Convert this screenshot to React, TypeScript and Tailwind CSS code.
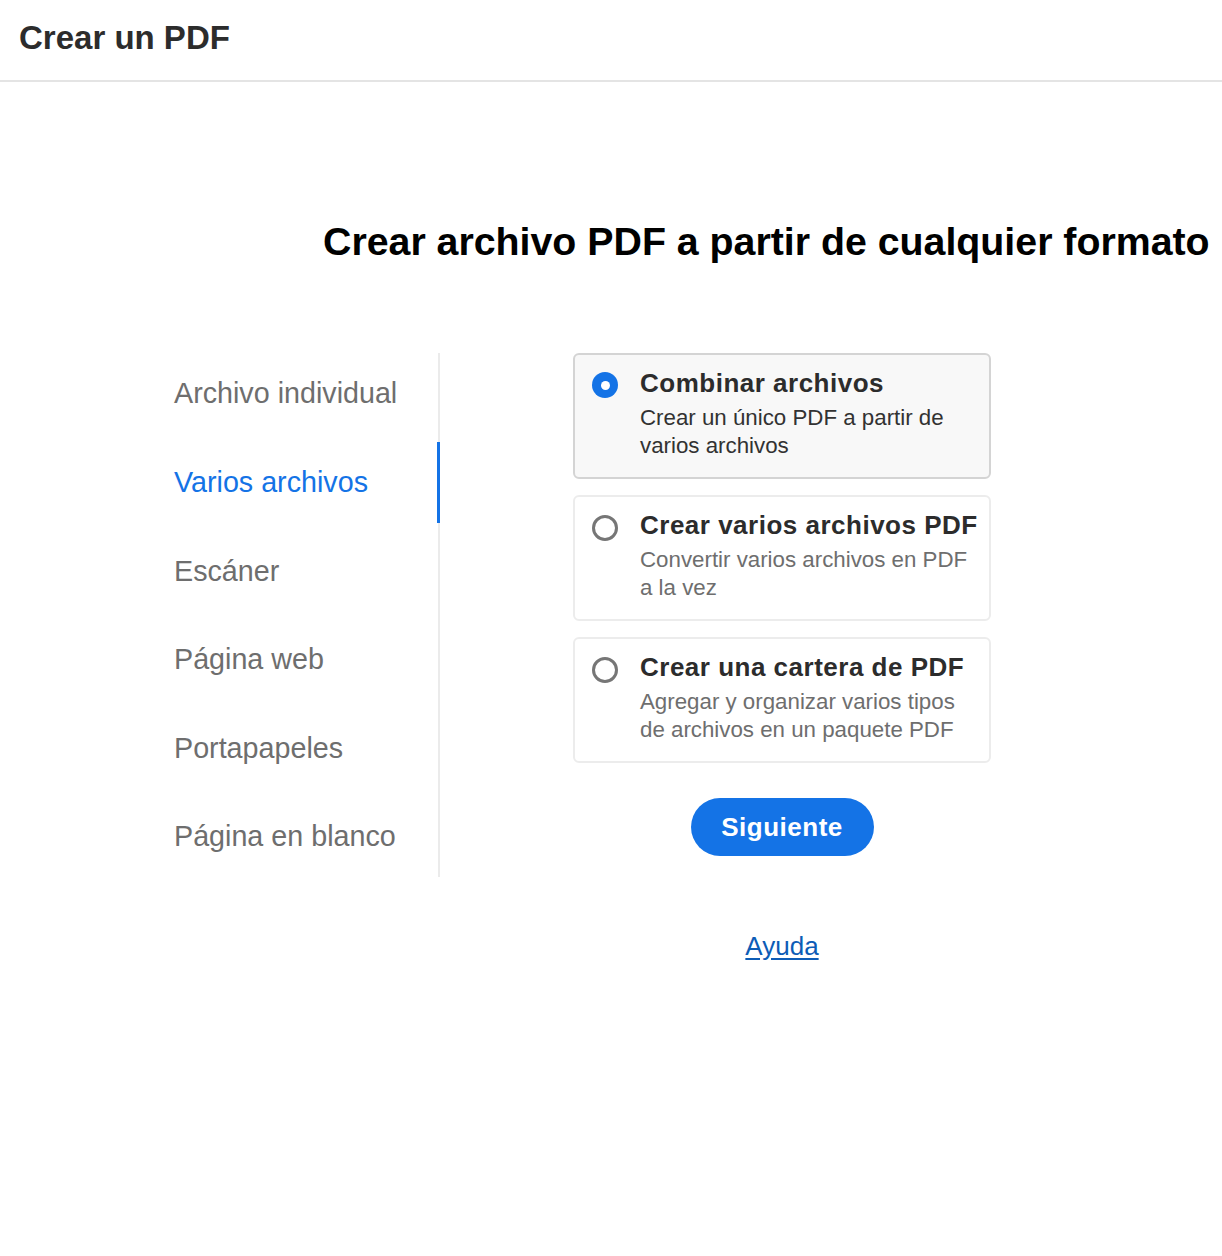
const navItems = [
  "Archivo individual",
  "Varios archivos",
  "Escáner",
  "Página web",
  "Portapapeles",
  "Página en blanco",
]

const options = [
  {
    title: "Combinar archivos",
    desc: "Crear un único PDF a partir de varios archivos",
    selected: true,
  },
  {
    title: "Crear varios archivos PDF",
    desc: "Convertir varios archivos en PDF a la vez",
    selected: false,
  },
  {
    title: "Crear una cartera de PDF",
    desc: "Agregar y organizar varios tipos de archivos en un paquete PDF",
    selected: false,
  },
]

function Radio({ checked }: { checked: boolean }) {
  if (checked) {
    return (
      <span className="mt-[5px] flex size-[26px] shrink-0 items-center justify-center rounded-full bg-[#1473e6]">
        <span className="size-[9px] rounded-full bg-white" />
      </span>
    )
  }
  return <span className="mt-[6px] size-[26px] shrink-0 rounded-full border-[3px] border-[#767676] bg-white" />
}

export default function App() {
  return (
    <div className="min-h-[1256px] w-[1222px] bg-white font-['Liberation_Sans',Arial,sans-serif]">
      <header className="h-[82px] border-b-2 border-[#e4e4e4] pl-[19px] pt-[21px]">
        <h1 className="text-[33px] leading-none font-bold text-[#2c2c2c]">Crear un PDF</h1>
      </header>

      <main>
        <h2 className="mt-[140px] pl-[323px] text-[39.3px] leading-none font-bold whitespace-nowrap text-black">
          Crear archivo PDF a partir de cualquier formato
        </h2>

        <div className="mt-[92px] flex items-start pl-[174px]">
          <nav className="flex w-[266px] flex-col gap-[7.6px] border-r-2 border-[#ebebeb]">
            {navItems.map((item, i) => (
              <div
                key={item}
                className={
                  i === 1
                    ? "-mr-[2px] flex h-[81px] items-center border-r-[3px] border-[#1473e6] text-[28.7px] leading-none text-[#1473e6]"
                    : "flex h-[81px] items-center text-[28.7px] leading-none text-[#6e6e6e]"
                }
              >
                {item}
              </div>
            ))}
          </nav>

          <div className="ml-[133px] flex w-[418px] flex-col items-center">
            <div className="flex w-full flex-col gap-[16px]">
              {options.map((opt) => (
                <div
                  key={opt.title}
                  className={
                    opt.selected
                      ? "flex h-[126px] gap-[22px] rounded-[6px] border-2 border-[#d4d4d4] bg-[#f8f8f8] pt-[12px] pl-[17px] pr-[13px]"
                      : "flex h-[126px] gap-[22px] rounded-[6px] border-2 border-[#ececec] bg-white pt-[12px] pl-[17px] pr-[13px]"
                  }
                >
                  <Radio checked={opt.selected} />
                  <div className="flex-1">
                    <div className="text-[26px] leading-[32px] font-bold tracking-[0.5px] whitespace-nowrap text-[#2c2c2c]">
                      {opt.title}
                    </div>
                    <p
                      className={
                        opt.selected
                          ? "mt-[5px] text-[22.3px] leading-[28px] text-[#323232]"
                          : "mt-[5px] text-[22.3px] leading-[28px] text-[#6e6e6e]"
                      }
                    >
                      {opt.desc}
                    </p>
                  </div>
                </div>
              ))}
            </div>

            <button className="mt-[35px] h-[58px] w-[183px] rounded-full bg-[#1473e6] text-[26px] font-bold tracking-[0.5px] text-white">
              Siguiente
            </button>

            <a href="#" className="mt-[77px] text-[26px] leading-none text-[#0d5cb6] underline underline-offset-[3px]">
              Ayuda
            </a>
          </div>
        </div>
      </main>
    </div>
  )
}
